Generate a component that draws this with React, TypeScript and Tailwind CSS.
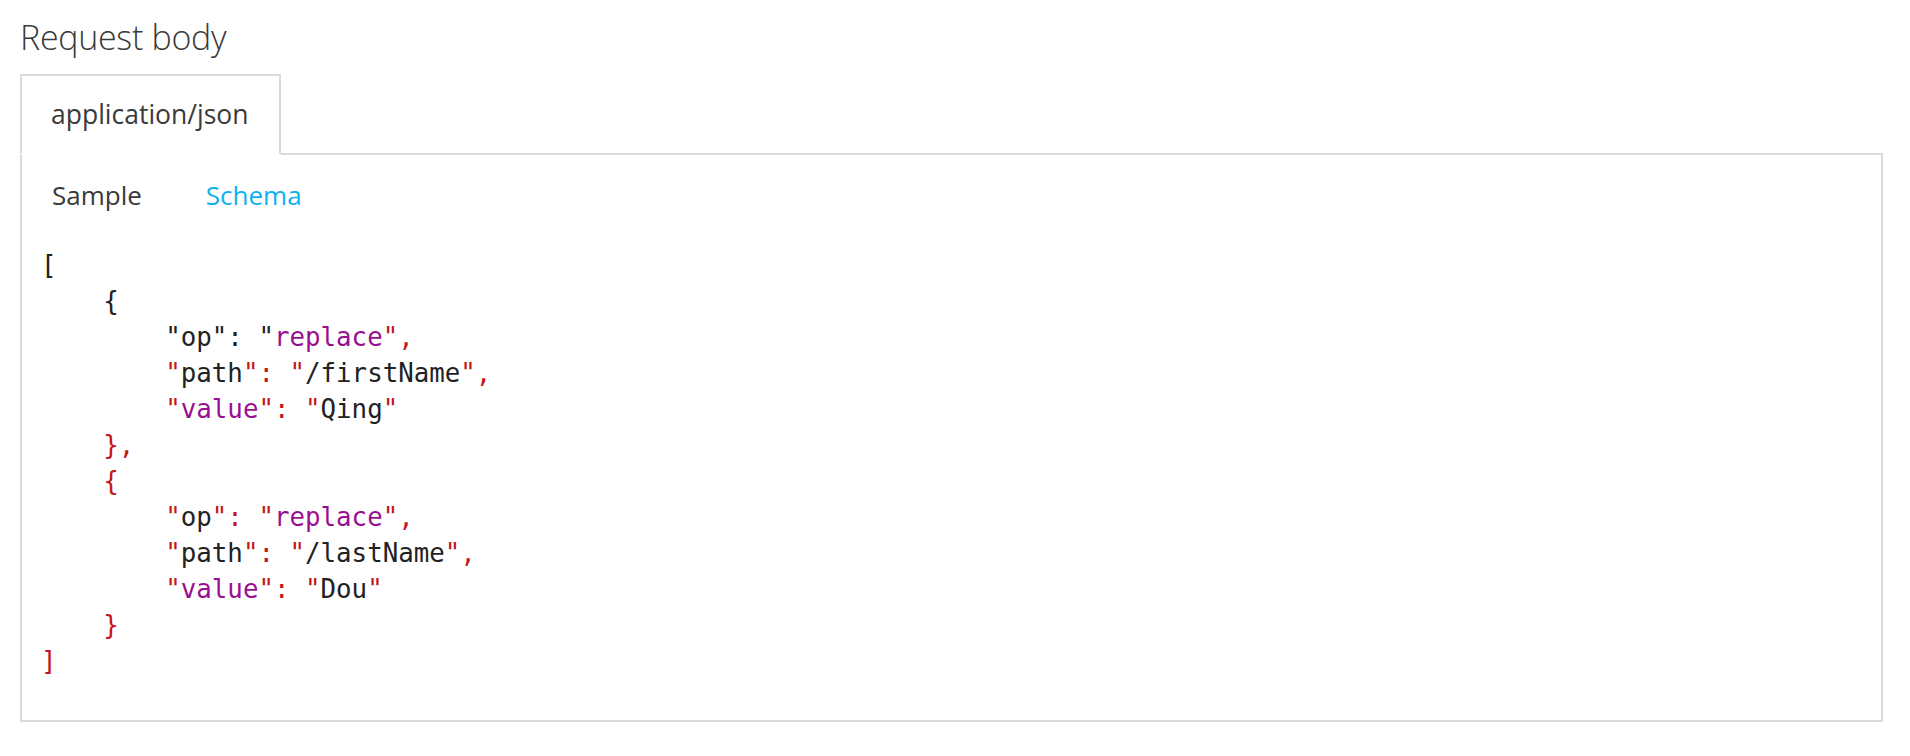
import React from "react";

type Tok = [string, "k" | "r" | "p"];

// each line: indent level + colored tokens (k = plain, r = red, p = purple)
const lines: { indent: number; toks: Tok[] }[] = [
  { indent: 0, toks: [["[", "k"]] },
  { indent: 1, toks: [["{", "k"]] },
  { indent: 2, toks: [['"op": "', "k"], ["replace", "p"], ['",', "r"]] },
  { indent: 2, toks: [['"', "r"], ["path", "k"], ['": "', "r"], ["/firstName", "k"], ['",', "r"]] },
  { indent: 2, toks: [['"', "r"], ["value", "p"], ['": "', "r"], ["Qing", "k"], ['"', "r"]] },
  { indent: 1, toks: [["},", "r"]] },
  { indent: 1, toks: [["{", "r"]] },
  { indent: 2, toks: [['"', "r"], ["op", "k"], ['": "', "r"], ["replace", "p"], ['",', "r"]] },
  { indent: 2, toks: [['"', "r"], ["path", "k"], ['": "', "r"], ["/lastName", "k"], ['",', "r"]] },
  { indent: 2, toks: [['"', "r"], ["value", "p"], ['": "', "r"], ["Dou", "k"], ['"', "r"]] },
  { indent: 1, toks: [["}", "r"]] },
  { indent: 0, toks: [["]", "r"]] },
];

const tokClass = {
  k: "text-[#222222]",
  r: "text-[#c3171b]",
  p: "text-[#990f8f]",
};

export default function App() {
  return (
    <div className="min-h-screen bg-white pl-5 pr-[27px] pt-[11px] font-['Open_Sans',sans-serif]">
      <h2 className="text-[34px] leading-[52px] font-light text-[#3a3a3a] tracking-[-0.3px]">Request body</h2>
      <div className="mt-[11px]">
        <div className="relative z-10 -mb-[2px] inline-flex h-[81px] items-center border-2 border-[#dadada] border-b-white pl-[29px] pr-[30px]">
          <span className="text-[26.5px] text-[#3a3a3a]">application/json</span>
        </div>
        <div className="h-[569px] border-2 border-[#dadada]">
          <div className="flex gap-[64px] px-[30px] pt-[16px] text-[26px] leading-[48px]">
            <span className="text-[#3a3a3a]">Sample</span>
            <span className="text-[#0db1ef]">Schema</span>
          </div>
          <pre className="mt-[28px] pl-[19px] font-['DejaVu_Sans_Mono',monospace] text-[25.8px] leading-[36px]">
            {lines.map((ln, i) => (
              <div key={i}>
                {"    ".repeat(ln.indent)}
                {ln.toks.map(([t, c], j) => (
                  <span key={j} className={tokClass[c]}>
                    {t}
                  </span>
                ))}
              </div>
            ))}
          </pre>
        </div>
      </div>
    </div>
  );
}
